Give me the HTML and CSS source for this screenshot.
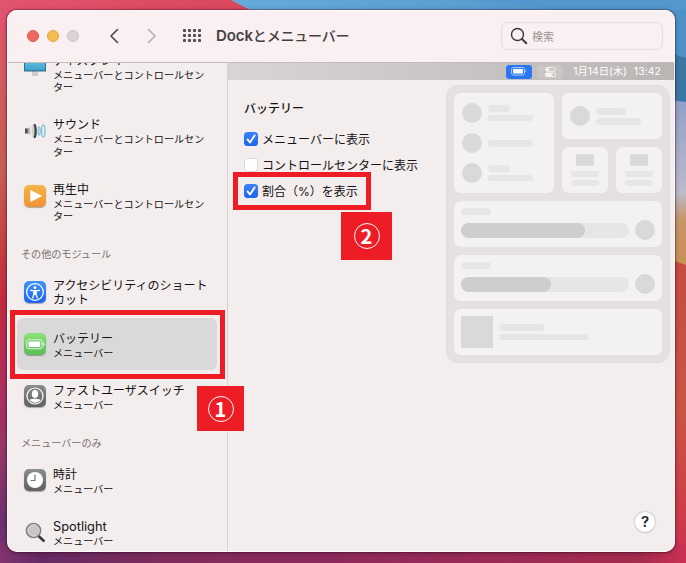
FILE: index.html
```html
<!DOCTYPE html>
<html lang="ja">
<head>
<meta charset="utf-8">
<title>Dockとメニューバー</title>
<link rel="stylesheet" href="styles.css">
</head>
<body>
<div class="desktop">
  <svg class="wallpaper" viewBox="0 0 686 563" preserveAspectRatio="none">
    <defs>
      <linearGradient id="wl" x1="0" y1="0" x2="0" y2="1">
        <stop offset="0" stop-color="#e2536f"/><stop offset=".12" stop-color="#d65a62"/><stop offset=".3" stop-color="#c95f54"/><stop offset=".43" stop-color="#c84442"/><stop offset=".53" stop-color="#c42b40"/><stop offset=".65" stop-color="#b52c58"/><stop offset=".8" stop-color="#973768"/><stop offset=".93" stop-color="#6d3070"/><stop offset="1" stop-color="#81336f"/>
      </linearGradient>
      <linearGradient id="wt"><stop offset="0" stop-color="#e2536f"/><stop offset="1" stop-color="#d9475c"/></linearGradient>
      <linearGradient id="wb"><stop offset="0" stop-color="#81336f"/><stop offset=".06" stop-color="#652a64"/><stop offset=".25" stop-color="#802c5c"/><stop offset=".6" stop-color="#942a5b"/><stop offset=".93" stop-color="#a52b4c"/><stop offset="1" stop-color="#cc3054"/></linearGradient>
      <linearGradient id="ws" x1="0" y1="0" x2="1" y2="0"><stop offset="0" stop-color="#66aada"/><stop offset="1" stop-color="#4f91c7"/></linearGradient>
      <linearGradient id="wr" x1="0" y1="0" x2="0" y2="1"><stop offset="0" stop-color="#939fc8"/><stop offset=".55" stop-color="#bbbccb"/><stop offset=".7" stop-color="#c79669"/><stop offset="1" stop-color="#c99250"/></linearGradient>
      <linearGradient id="wo" x1="0" y1="0" x2="0" y2="1"><stop offset="0" stop-color="#c64b45"/><stop offset=".5" stop-color="#cb5645"/><stop offset=".8" stop-color="#cf4048"/><stop offset="1" stop-color="#cc3054"/></linearGradient>
    </defs>
    <rect width="120" height="563" fill="url(#wl)"/>
    <rect width="260" height="30" fill="url(#wt)"/>
    <path d="M231 0H686V110H300L250 10Z" fill="url(#ws)"/>
    <path d="M462 0Q510 1 552 10H686V0Z" fill="#5297cd"/>
    <path d="M660 50L686 58V103L660 99Z" fill="#3b77a6"/>
    <path d="M660 99L686 102V270H660Z" fill="url(#wr)"/>
    <path d="M660 256L686 265V563H660Z" fill="url(#wo)"/>
    <rect y="545" width="686" height="18" fill="url(#wb)"/>
  </svg>

  <div class="window">
    <header class="titlebar">
      <div class="lights"><i class="red"></i><i class="yellow"></i><i class="grey"></i></div>
      <svg class="nav" width="50" height="18" viewBox="0 0 50 18" fill="none" stroke-width="1.6" stroke-linecap="round" stroke-linejoin="round"><path d="M9.500 2.500L3 9l6.500 6.500" stroke="#4b4647"/><path d="M40.500 2.500L47 9l-6.500 6.500" stroke="#b6aeb0"/></svg>
      <svg class="grid" width="19" height="14" viewBox="0 0 19 14" fill="#564f51"><g id="r"><rect x="0" width="3" height="3" rx=".8"/><rect x="5" width="3" height="3" rx=".8"/><rect x="10" width="3" height="3" rx=".8"/><rect x="15" width="3" height="3" rx=".8"/></g><use href="#r" y="5"/><use href="#r" y="10"/></svg>
      <h1>Dock<span>とメニューバー</span></h1>
      <div class="search">
        <svg width="18" height="18" viewBox="0 0 18 18" fill="none" stroke="#3e393a"><circle cx="7.500" cy="7.500" r="6" stroke-width="1.400"/><path d="M12 12l4.300 4.200" stroke-width="2" stroke-linecap="round"/></svg>
        <span>検索</span>
      </div>
    </header>

    <div class="body">
      <nav class="sidebar">
        <div class="item tall first">
          <svg class="icon" viewBox="0 0 22 22"><defs><linearGradient id="mon" x1="0" y1="0" x2="0" y2="1"><stop offset="0" stop-color="#72cdf0"/><stop offset="1" stop-color="#3b9fca"/></linearGradient></defs><rect x="8" y="15" width="6" height="5" fill="#ccc8cb"/><rect x=".4" y="1" width="21.200" height="14" fill="url(#mon)" stroke="#25617c" stroke-width=".9"/></svg>
          <div><b>ディスプレイ</b><small>メニューバーとコントロールセンター</small></div>
        </div>
        <div class="item tall">
          <svg class="icon" viewBox="0 0 22 22"><defs><linearGradient id="spk"><stop offset="0" stop-color="#555"/><stop offset=".3" stop-color="#999"/><stop offset=".65" stop-color="#eee"/><stop offset="1" stop-color="#aaa"/></linearGradient></defs><path d="M1 8.500l4-.5 5.500-4.500v15L5 14l-4-.5z" fill="url(#spk)"/><ellipse cx="10.800" cy="11" rx="2" ry="7.300" fill="#3f3f41"/><ellipse cx="9.400" cy="11" rx="1.100" ry="6" fill="#d5d5d5"/><path d="M1 9h2.500v4H1z" fill="#4d4d4f"/><g fill="none" stroke="#82c5db"><ellipse cx="15.200" cy="11" rx="1" ry="4.200" stroke-width="1.300"/><ellipse cx="19.300" cy="11" rx="1.700" ry="6" stroke-width="1.400"/></g></svg>
          <div><b>サウンド</b><small>メニューバーとコントロールセンター</small></div>
        </div>
        <div class="item tall">
          <span class="icon tile orange"><svg viewBox="0 0 22 22"><path d="M6.300 5v12l12-6z" fill="#fff"/></svg></span>
          <div><b>再生中</b><small>メニューバーとコントロールセンター</small></div>
        </div>
        <h2>その他のモジュール</h2>
        <div class="item access">
          <span class="icon tile blue"><svg viewBox="0 0 22 22" fill="none" stroke="#fff"><circle cx="11" cy="11" r="8.300" stroke-width="1.300"/><circle cx="11" cy="6.700" r="1.400" fill="#fff" stroke="none"/><path d="M6.600 9.300l4.400.7 4.400-.7M9.900 10v3.200L8.700 17M12.100 10v3.200l1.200 3.800M10 13h2" stroke-width="1.300" stroke-linecap="round"/><path d="M10 9.500h2v4h-2z" fill="#fff" stroke="none"/></svg></span>
          <div><b>アクセシビリティのショートカット</b></div>
        </div>
        <div class="item selected">
          <span class="icon tile green"><svg viewBox="0 0 22 22"><rect x="2.600" y="6.700" width="15.500" height="9" rx="2.500" fill="none" stroke="#c4ebbd" stroke-width="1.200"/><rect x="4.500" y="8.500" width="11.700" height="5.400" rx="1" fill="#fff"/><path d="M18.700 8.300q3.800 2.800 0 5.800z" fill="#d4efd0"/></svg></span>
          <div><b>バッテリー</b><small>メニューバー</small></div>
        </div>
        <div class="item">
          <span class="icon tile dark"><svg viewBox="0 0 22 22"><defs><clipPath id="usr"><circle cx="11" cy="11" r="6.700"/></clipPath></defs><circle cx="11" cy="11" r="8" fill="none" stroke="#fff" stroke-width="1.200"/><g clip-path="url(#usr)" fill="#fff"><ellipse cx="11" cy="9" rx="3.200" ry="3.900"/><path d="M3 19q0-4.500 6-5.200h4q6 .7 6 5.200z"/></g></svg></span>
          <div><b>ファストユーザスイッチ</b><small>メニューバー</small></div>
        </div>
        <h2>メニューバーのみ</h2>
        <div class="item">
          <span class="icon tile dark"><svg viewBox="0 0 22 22"><circle cx="11" cy="11" r="8" fill="#fff"/><path d="M11 5.500V11.500H6.500" fill="none" stroke="#777" stroke-width="1.200"/></svg></span>
          <div><b>時計</b><small>メニューバー</small></div>
        </div>
        <div class="item">
          <svg class="icon" viewBox="0 0 22 22"><path d="M14.800 15.300l4.800 4.500" stroke="#383838" stroke-width="2.600" stroke-linecap="round"/><circle cx="9.500" cy="9.500" r="7" fill="#c9c5c7" stroke="#818183" stroke-width="1.700"/><circle cx="9.500" cy="9.500" r="5.700" fill="none" stroke="#e4e1e2" stroke-width=".8"/></svg>
          <div><b class="latin">Spotlight</b><small>メニューバー</small></div>
        </div>
      </nav>

      <main>
        <div class="menubar">
          <span class="pill active"><svg width="16" height="9" viewBox="0 0 16 9"><rect x=".5" y=".5" width="13" height="7.500" rx="2" fill="none" stroke="#a9cbff"/><rect x="2" y="2" width="10" height="4.500" rx=".7" fill="#fff"/><path d="M14.500 3v2.600q1.400-1.300 0-2.600" fill="#fff"/></svg></span>
          <span class="pill"><svg width="11" height="10" viewBox="0 0 11 10"><rect x=".5" y=".5" width="10" height="3.800" rx="1.900" fill="none" stroke="#f4f1f1"/><circle cx="2.600" cy="2.400" r="1.500" fill="#fff"/><rect y="5.500" width="11" height="4.500" rx="2.250" fill="#f4f1f1"/><circle cx="8.600" cy="7.750" r="1.300" fill="#bcb6b6"/></svg></span>
          <span class="date">1月14日(木)</span><span class="time">13:42</span>
        </div>
        <div class="content">
          <section class="options">
            <h3>バッテリー</h3>
            <label><i class="check on"><svg viewBox="0 0 14 14"><path d="M3.500 7.400l2.500 3 4.600-7" fill="none" stroke="#fff" stroke-width="1.900" stroke-linecap="round" stroke-linejoin="round"/></svg></i><span>メニューバーに表示</span></label>
            <label><i class="check"></i><span>コントロールセンターに表示</span></label>
            <label><i class="check on"><svg viewBox="0 0 14 14"><path d="M3.500 7.400l2.500 3 4.600-7" fill="none" stroke="#fff" stroke-width="1.900" stroke-linecap="round" stroke-linejoin="round"/></svg></i><span>割合（%）を表示</span></label>
          </section>
          <section class="preview">
            <div class="card network">
              <div class="line"><i class="dot"></i><span><i class="bar w22"></i><i class="bar thin w45"></i></span></div>
              <div class="line"><i class="dot"></i><span><i class="bar w45"></i></span></div>
              <div class="line"><i class="dot"></i><span><i class="bar w22"></i><i class="bar thin w45"></i></span></div>
            </div>
            <div class="card focus"><div class="line"><i class="dot"></i><span><i class="bar w30"></i><i class="bar w45"></i></span></div></div>
            <div class="card mini"><i class="chip"></i><i class="bar thin"></i><i class="bar thin"></i></div>
            <div class="card mini"><i class="chip"></i><i class="bar thin"></i><i class="bar thin"></i></div>
            <div class="card slider"><i class="bar w30"></i><div class="sliderrow"><i class="track"><i class="fill high"></i></i><i class="dot"></i></div></div>
            <div class="card slider"><i class="bar w30"></i><div class="sliderrow"><i class="track"><i class="fill mid"></i></i><i class="dot"></i></div></div>
            <div class="card media"><i class="art"></i><span><i class="bar w45"></i><i class="bar thin w90"></i></span></div>
          </section>
          <button class="help">?</button>
        </div>
      </main>
    </div>
  </div>

  <div class="frame frame-one"></div>
  <div class="frame frame-two"></div>
  <div class="badge badge-one"><span class="ring">1</span></div>
  <div class="badge badge-two"><span class="ring">2</span></div>
</div>
</body>
</html>
```
FILE: styles.css
```css
* { box-sizing: border-box; margin: 0; padding: 0; }
body { width: 686px; height: 563px; overflow: hidden; font-family: Inter, "Noto Sans CJK JP", sans-serif; color: #141213; }
i { font-style: normal; display: block; flex: none; }
svg { display: block; flex: none; }

.desktop { position: relative; width: 686px; height: 563px; padding: 10px 11px 11px 7px; }
.wallpaper { position: absolute; left: 0; top: 0; width: 686px; height: 563px; }
.window { position: relative; height: 542px; border-radius: 10px; overflow: hidden; background: #f3eded; display: flex; flex-direction: column; box-shadow: 0 0 0 1px rgba(60, 10, 30, .3), 0 1px 5px rgba(40, 0, 30, .4); }
.window::after { content: ""; position: absolute; inset: 0; border-radius: 10px; box-shadow: inset 0 0 0 1px rgba(255, 255, 255, .75); pointer-events: none; }

.titlebar { height: 53px; flex: none; background: #faf0f1; border-bottom: 1px solid #c4bcbc; display: flex; align-items: center; padding: 0 12px 1px 20px; }
.lights { display: flex; gap: 8px; }
.lights i { width: 12px; height: 12px; border-radius: 50%; border: 1px solid; }
.red { background: #ee6a5e; border-color: #d95c53 !important; }
.yellow { background: #f5bd4f; border-color: #dca643 !important; }
.grey { background: #ddd3d5; border-color: #ccc2c5 !important; }
.nav { margin-left: 29px; }
.grid { margin-left: 25px; }
h1 { margin-left: 14px; font-size: 15px; line-height: 20px; font-weight: 600; color: #454041; letter-spacing: -.1px; white-space: nowrap; }
h1 span { font-size: 14px; font-weight: 500; letter-spacing: -.2px; }
.search { margin-left: auto; width: 162px; height: 28px; border: 1px solid #e7dddf; border-radius: 6px; display: flex; align-items: center; padding-left: 8px; gap: 4px; font-size: 11px; color: #9c9496; }

.body { flex: 1; min-height: 0; display: flex; }
.sidebar { width: 221px; flex: none; border-right: 1px solid #d8d1d2; overflow: hidden; display: flex; flex-direction: column; }
.item { height: 52px; flex: none; display: flex; align-items: center; padding: 0 3px 0 7px; margin: 0 10px; gap: 7px; border-radius: 6px; }
.item > div { padding-top: 3px; }
.item.tall { height: 64.5px; align-items: flex-start; padding-top: 12px; }
.item.tall > div { padding-top: 1px; }
.item.tall .icon { margin-top: 4px; }
.item.first { margin-top: -23.5px; }
.item b { display: block; font-weight: 400; font-size: 12px; line-height: 16px; }
.item small { display: block; font-size: 10.1px; line-height: 12.5px; width: 156px; }
.item b.latin { font-size: 12.8px; }
.item.access b { line-height: 14px; letter-spacing: -.02px; width: 158px; }
.item.selected { background: #dad9d9; }
.icon { width: 22px; height: 22px; flex: none; }
.tile { border-radius: 5px; box-shadow: 0 1px 1px rgba(0, 0, 0, .3); }
.orange { background: linear-gradient(#f3b744, #ef9135); }
.blue { background: linear-gradient(#3e94f8, #1a64f3); }
.green { background: linear-gradient(#8ce17b, #5bbd59); }
.dark { background: linear-gradient(#8d8c8e, #5f6062); }
h2 { height: 32.5px; flex: none; padding: 13px 0 0 14px; font-size: 10.1px; line-height: 16px; font-weight: 400; color: #767071; }

main { flex: 1; display: flex; flex-direction: column; min-width: 0; }
.menubar { height: 17px; flex: none; display: flex; align-items: center; justify-content: flex-end; padding-right: 14px; background: linear-gradient(90deg, #dad5d5, #cdc8c8 40%, #bbb5b5); color: #fff; font-size: 10.4px; line-height: 17px; }
.pill { width: 26px; height: 14px; border-radius: 3px; background: #cbc6c6; display: flex; align-items: center; justify-content: center; margin-right: 5px; }
.pill.active { background: #2b77f3; }
.date { margin-left: 5px; letter-spacing: -.05px; }
.time { margin-left: 7px; letter-spacing: .1px; }

.content { flex: 1; position: relative; display: flex; justify-content: space-between; padding: 5px 5px 0 16px; }
.options { padding-top: 15px; font-size: 12px; white-space: nowrap; }
h3 { font-size: 12px; line-height: 18px; font-weight: 500; margin-bottom: 8px; }
label { display: flex; align-items: center; height: 26px; gap: 4px; }
label span { padding-bottom: 2px; }
.check { width: 14px; height: 14px; border-radius: 3.5px; background: #fff; border: 1px solid #ddd6d7; }
.check.on { background: linear-gradient(#3c82f7, #1d64ec); border: 0; }

.preview { width: 224px; height: 278px; border-radius: 12px; background: #e6e1e1; border: 1px solid #e1dcdc; padding: 7px; display: grid; grid-template-columns: 100px 46px 46px; grid-template-rows: 46px 46px 46px 46px 46px; gap: 8px; }
.card { background: #f4f1f2; border-radius: 7px; display: flex; }
.network { grid-row: 1 / 3; flex-direction: column; padding: 10px 8px; gap: 10px; }
.focus { grid-column: 2 / 4; align-items: center; padding-left: 8px; }
.line { display: flex; align-items: center; gap: 6px; height: 20px; }
.line span, .media span { display: flex; flex-direction: column; gap: 3px; }
.dot { width: 20px; height: 20px; border-radius: 50%; background: #dbd8d9; }
.bar { height: 7px; border-radius: 4px; background: #e7e5e6; }
.thin { height: 6px; }
.w22 { width: 22px; } .w30 { width: 30px; } .w45 { width: 45px; } .w90 { width: 90px; }
.mini { flex-direction: column; align-items: center; padding-top: 7px; gap: 3px; }
.mini .bar { width: 28px; }
.chip { width: 18px; height: 12px; border-radius: 2px; background: #dbd8d9; margin-bottom: 2px; }
.slider { grid-column: 1 / 4; flex-direction: column; padding: 7px 7px 0; }
.sliderrow { display: flex; align-items: center; justify-content: space-between; margin-top: 5px; }
.track { width: 168px; height: 15px; border-radius: 8px; background: #e7e5e6; }
.fill { height: 15px; border-radius: 8px; background: #cfcdce; }
.high { width: 124px; } .mid { width: 90px; }
.media { grid-column: 1 / 4; align-items: center; padding-left: 7px; gap: 6px; }
.art { width: 32px; height: 32px; background: #dbd8d9; border-radius: 1px; }

.help { position: absolute; right: 20px; bottom: 20px; width: 20px; height: 20px; border: 0; border-radius: 50%; background: #fff; box-shadow: 0 0 1px 1px #d8d1d2, 0 1px 1px #b5afaf; font: 600 15px/20px Inter, sans-serif; color: #242122; text-align: center; }

.frame { position: absolute; border: 5px solid #ee1c25; }
.frame-one { left: 10px; top: 310px; width: 215px; height: 69px; }
.frame-two { left: 233px; top: 172px; width: 138px; height: 38px; }
.badge { position: absolute; background: #ee1c25; display: flex; align-items: center; justify-content: center; }
.badge-one { left: 197px; top: 386px; width: 47px; height: 45px; }
.badge-two { left: 341px; top: 212px; width: 50px; height: 48px; width: 51px; }
.ring { width: 26px; height: 26px; border: 1px solid #fff; border-radius: 50%; color: #fff; font: 700 20px/23px "Noto Sans CJK JP", sans-serif; text-align: center; }
```
